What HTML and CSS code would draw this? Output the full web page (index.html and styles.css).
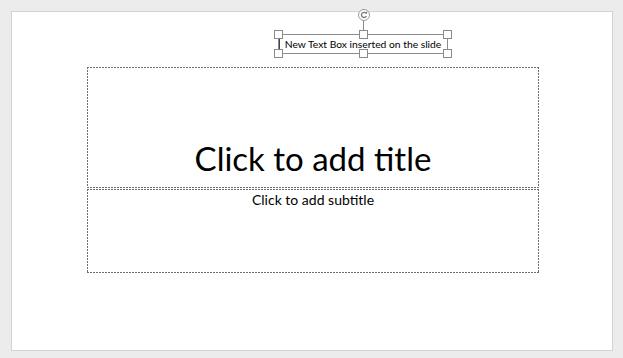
FILE: index.html
```html
<!DOCTYPE html>
<html>
<head>
<meta charset="utf-8">
<link rel="stylesheet" href="styles.css">
</head>
<body>
<div class="slide">
  <div class="ph title"><span>Click to add title</span></div>
  <div class="ph subtitle"><span>Click to add subtitle</span></div>
  <div class="textbox">
    <span class="rotate"><svg width="12" height="12" viewBox="0 0 12 12"><circle cx="6" cy="6" r="5.5" fill="#fff" stroke="#9a9a9a"/><path d="M8.3 4.6 A2.6 2.6 0 1 0 8.4 7" fill="none" stroke="#7a7a7a" stroke-width="1.3"/><path d="M6.9 3.2 L9 4.9 L9.2 2.6 Z" fill="#7a7a7a"/></svg></span>
    <span class="stem"></span>
    <span class="caret"></span>
    <span class="tb-text">New Text Box inserted on the slide</span>
    <span class="h tl"></span><span class="h tm"></span><span class="h tr"></span>
    <span class="h bl"></span><span class="h bm"></span><span class="h br"></span>
  </div>
</div>
</body>
</html>
```
FILE: styles.css
```css
html, body {
  margin: 0;
  padding: 0;
  background: #ececec;
  width: 623px;
  height: 358px;
  overflow: hidden;
}
.slide {
  position: relative;
  box-sizing: border-box;
  margin: 11px 0 0 11px;
  width: 602px;
  height: 340px;
  background: #fff;
  border: 1px solid #d3d3d3;
  padding: 55px 0 0 75px;
  font-family: Lato, "Open Sans", sans-serif;
  color: #000;
}
.ph {
  box-sizing: border-box;
  width: 452px;
  display: flex;
  justify-content: center;
  background:
    repeating-linear-gradient(90deg, #6e6e6e 0 2px, transparent 2px 3px) left top / 100% 1px no-repeat,
    repeating-linear-gradient(90deg, #6e6e6e 0 2px, transparent 2px 3px) left bottom / 100% 1px no-repeat,
    repeating-linear-gradient(180deg, #6e6e6e 0 2px, transparent 2px 3px) left top / 1px 100% no-repeat,
    repeating-linear-gradient(180deg, #6e6e6e 0 2px, transparent 2px 3px) right top / 1px 100% no-repeat;
}
.title {
  height: 121px;
  align-items: flex-end;
  font-size: 33px;
  line-height: 1;
  padding-bottom: 13px;
}
.subtitle {
  margin-top: 1px;
  height: 84px;
  align-items: flex-start;
  font-size: 14px;
  line-height: 1;
  padding-top: 4px;
}
.textbox {
  position: absolute;
  left: 266px;
  top: 22px;
  width: 170px;
  height: 20px;
  box-sizing: border-box;
  border: 1px solid #8c8c8c;
  display: flex;
  align-items: center;
  justify-content: center;
  font-size: 10.3px;
}
.tb-text { line-height: 1; }
.caret {
  position: absolute;
  left: 0;
  top: 0;
  width: 1px;
  height: 18px;
  background: #444;
}
.h {
  position: absolute;
  width: 7px;
  height: 7px;
  background: #fff;
  border: 1px solid #8a8a8a;
}
.tl { left: -5px; top: -5px; }
.tm { left: 80px; top: -5px; }
.tr { right: -5px; top: -5px; }
.bl { left: -5px; bottom: -5px; }
.bm { left: 80px; bottom: -5px; }
.br { right: -5px; bottom: -5px; }
.rotate {
  position: absolute;
  left: 79px;
  top: -26px;
  width: 12px;
  height: 12px;
  display: block;
}
.rotate svg { display: block; }
.stem {
  position: absolute;
  left: 84px;
  top: -14px;
  width: 1px;
  height: 9px;
  background: #8a8a8a;
}
```
